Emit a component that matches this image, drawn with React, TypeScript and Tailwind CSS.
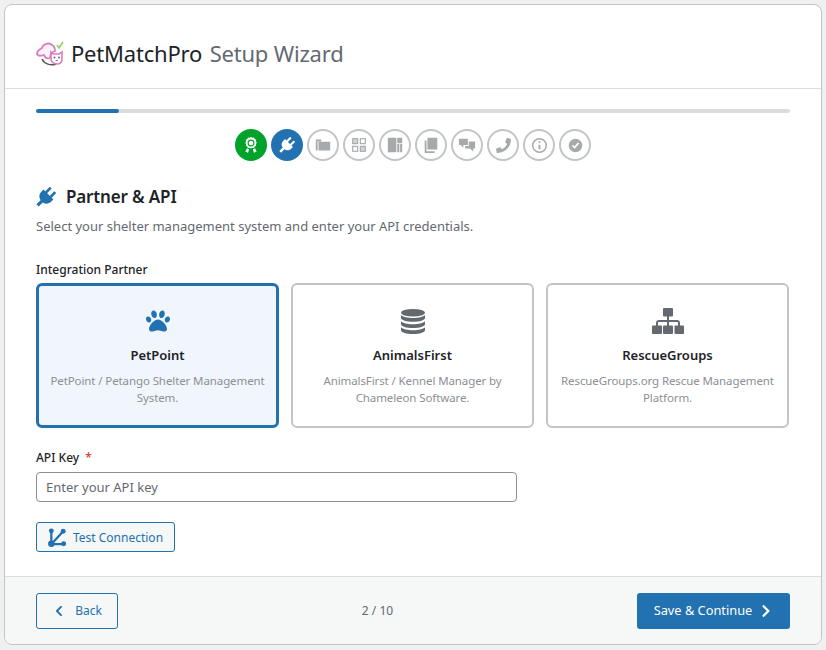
import React from 'react';
import { FaPaw, FaChevronLeft, FaChevronRight, FaPhone } from 'react-icons/fa';

const PlugIcon = ({ className = '' }: { className?: string }) => (
  <svg viewBox="0 0 20 20" className={className} fill="currentColor">
    <g transform="rotate(45 10 10)">
      <path d="M5.500 0h2.600v6.500H5.500zM11.900 0h2.600v6.500h-2.600zM3 6.500h14v3c0 3.800-2.500 6-5.400 6.600V22H8.400v-5.900C5.500 15.500 3 13.300 3 9.500z" />
    </g>
  </svg>
);

const AwardIcon = () => (
  <svg viewBox="0 0 20 20" className="w-[18px] h-[18px] text-white" fill="currentColor">
    <path fillRule="evenodd" d="M10 1l1.500 1 1.800-.2.800 1.600 1.600.8-.2 1.800 1 1.500-1 1.500.2 1.800-1.600.8-.8 1.600-1.800-.2-1.500 1-1.500-1-1.800.2-.8-1.600-1.600-.8.2-1.800-1-1.500 1-1.500-.2-1.800 1.600-.8.8-1.600 1.800.2zM10 4a3.800 3.800 0 100 7.600A3.800 3.800 0 0010 4z" />
    <circle cx="10" cy="7.800" r="2.600" />
    <path d="M5.500 13.500l2.500 1.300-1.500 4.500-1-1.800-1.800.2zM14.500 13.500l-2.500 1.300 1.500 4.500 1-1.800 1.800.2z" />
  </svg>
);

const FolderIcon = () => (
  <svg viewBox="0 0 20 20" className="w-[18px] h-[18px]" fill="currentColor">
    <path d="M2 4h6v2H2zM2 6.500h2V16H2zM5 6.500h13V16H5z" />
  </svg>
);

const GridIcon = () => (
  <svg viewBox="0 0 20 20" className="w-[18px] h-[18px]" fill="none" stroke="currentColor" strokeWidth="1.300">
    <rect x="3" y="3" width="5.500" height="5.500" fill="currentColor" fillOpacity="0.5" />
    <rect x="11.500" y="3" width="5.500" height="5.500" />
    <rect x="3" y="11.500" width="5.500" height="5.500" />
    <rect x="11.500" y="11.500" width="5.500" height="5.500" fill="currentColor" fillOpacity="0.5" />
  </svg>
);

const LayoutIcon = () => (
  <svg viewBox="0 0 20 20" className="w-[18px] h-[18px]" fill="currentColor">
    <path d="M2 2h9.500v16H2zM12.500 2H18v6h-5.500zM12.500 9h2.300v9h-2.300zM15.700 9H18v9h-2.300z" />
  </svg>
);

const PagesIcon = () => (
  <svg viewBox="0 0 20 20" className="w-[18px] h-[18px]" fill="currentColor">
    <path d="M6 2h11v13H6z" />
    <path d="M3 5h2v12h9v2H3z" />
  </svg>
);

const ChatIcon = () => (
  <svg viewBox="0 0 20 20" className="w-[18px] h-[18px]" fill="currentColor">
    <path d="M1 3h10v7H6v3l-3-3H1z" />
    <path d="M12 6h7v8h-2v3.500L13.500 14H8v-3h4z" />
  </svg>
);

const InfoIcon = () => (
  <svg viewBox="0 0 20 20" className="w-[17px] h-[17px]" fill="none" stroke="currentColor" strokeWidth="1.800">
    <circle cx="10" cy="10" r="8" />
    <path d="M10 9v5.500" strokeWidth="2.200" />
    <circle cx="10" cy="6" r="1.200" fill="currentColor" stroke="none" />
  </svg>
);

const CheckIcon = () => (
  <svg viewBox="0 0 20 20" className="w-[17px] h-[17px]" fill="currentColor">
    <path fillRule="evenodd" d="M10 2a8 8 0 100 16 8 8 0 000-16zm4.300 5.600l-5.200 6.100-3.400-3 1.300-1.400 1.900 1.700 3.900-4.600z" />
  </svg>
);

const NetworkIcon = () => (
  <svg viewBox="0 0 20 20" className="w-[19px] h-[19px]" fill="none" stroke="currentColor" strokeWidth="2.400">
    <path d="M3.500 3v14h13M3.500 17L16 3.500" />
    <circle cx="3.500" cy="3" r="2.600" fill="currentColor" stroke="none" />
    <circle cx="16" cy="3.500" r="2.600" fill="currentColor" stroke="none" />
    <circle cx="3.500" cy="16.500" r="3.400" fill="currentColor" stroke="none" />
    <circle cx="16.500" cy="16.500" r="2.600" fill="currentColor" stroke="none" />
  </svg>
);

const DatabaseIcon = () => (
  <svg viewBox="0 0 24 25" className="w-6 h-[25px] text-[#646970]" fill="currentColor">
    <ellipse cx="12" cy="3.800" rx="12" ry="3.800" />
    <path d="M0 6v3c0 2.100 5.400 3.800 12 3.800S24 11.100 24 9V6c-2 2-6.500 3-12 3S2 8 0 6z" />
    <path d="M0 12.200v3c0 2.100 5.400 3.800 12 3.800s12-1.700 12-3.800v-3c-2 2-6.500 3-12 3s-10-1-12-3z" />
    <path d="M0 18.200v3c0 2.100 5.400 3.800 12 3.800s12-1.700 12-3.800v-3c-2 2-6.500 3-12 3s-10-1-12-3z" />
  </svg>
);

const SitemapIcon = () => (
  <svg viewBox="0 0 32 26" className="w-8 h-[26px] text-[#646970]" fill="currentColor">
    <rect x="11" y="0" width="10" height="8.500" rx="1" />
    <rect x="0" y="17.500" width="10" height="8.500" rx="1" />
    <rect x="11" y="17.500" width="10" height="8.500" rx="1" />
    <rect x="22.500" y="17.500" width="9.500" height="8.500" rx="1" />
    <path d="M15 8h2v4h8c2 0 3 1 3 3v3h-2v-3c0-.7-.3-1-1-1h-8v4h-2v-4H7c-.7 0-1 .3-1 1v3H4v-3c0-2 1-3 3-3h8z" />
  </svg>
);

const PetLogo = () => (
  <svg viewBox="0 0 30 28" className="w-[30px] h-[28px]" fill="none">
    <path d="M22 6l2 3 4-6" stroke="#8fd46a" strokeWidth="1.600" />
    <path d="M2 15c0-3 3-5 5-6 1-4 7-6 10-3 2 1 3 4 3 6-3 1-5 3-5 7-3 1-5 0-6-3-3 1-6 1-7-1z" stroke="#d77fc0" strokeWidth="1.800" fill="#fdf2fa" />
    <path d="M7 20c2 5 9 7 14 5" stroke="#555" strokeWidth="1.500" />
    <path d="M16 13l2 2h6l3-2v7c0 3-2 5-5 5s-6-2-6-5z" stroke="#d77fc0" strokeWidth="1.600" fill="#fff" />
    <circle cx="19.500" cy="18.500" r="1" fill="#666" />
    <circle cx="24" cy="18.500" r="1" fill="#666" />
    <path d="M20.500 21.500h2.500" stroke="#888" strokeWidth="1" />
  </svg>
);

const steps = [
  { icon: <AwardIcon />, state: 'done' },
  { icon: <PlugIcon className="w-4 h-4" />, state: 'active' },
  { icon: <FolderIcon />, state: 'todo' },
  { icon: <GridIcon />, state: 'todo' },
  { icon: <LayoutIcon />, state: 'todo' },
  { icon: <PagesIcon />, state: 'todo' },
  { icon: <ChatIcon />, state: 'todo' },
  { icon: <FaPhone className="w-[15px] h-[15px]" />, state: 'todo' },
  { icon: <InfoIcon />, state: 'todo' },
  { icon: <CheckIcon />, state: 'todo' },
];

const partners = [
  {
    name: 'PetPoint',
    desc: 'PetPoint / Petango Shelter Management System.',
    icon: <FaPaw className="w-6 h-6 text-[#2271b1]" />,
    selected: true,
  },
  {
    name: 'AnimalsFirst',
    desc: 'AnimalsFirst / Kennel Manager by Chameleon Software.',
    icon: <DatabaseIcon />,
    selected: false,
  },
  {
    name: 'RescueGroups',
    desc: 'RescueGroups.org Rescue Management Platform.',
    icon: <SitemapIcon />,
    selected: false,
  },
];

export default function App() {
  return (
    <div className="w-[826px] h-[650px] bg-[#f0f0f1] pt-1 px-1 font-['Noto_Sans','Open_Sans',sans-serif] text-[#1d2327] overflow-hidden">
      <div className="w-[818px] h-[641px] bg-white border border-[#c3c4c7] rounded-lg overflow-hidden flex flex-col">
        <header className="h-[84px] shrink-0 border-b border-[#dcdcde] flex items-center pl-[30px] pt-[13px] gap-[6px]">
          <PetLogo />
          <h1 className="text-[22px] leading-none tracking-[-0.2px]">
            PetMatchPro <span className="text-[#646970] ml-[2px]">Setup Wizard</span>
          </h1>
        </header>

        <main className="flex-1 px-[31px] pt-5">
          <div className="h-1 bg-[#dcdcde] rounded-sm">
            <div className="h-1 w-[83px] bg-[#2271b1] rounded-sm" />
          </div>

          <div className="flex justify-center gap-1 mt-4">
            {steps.map((step, i) => (
              <div
                key={i}
                className={
                  step.state === 'done'
                    ? 'w-8 h-8 rounded-full flex items-center justify-center bg-[#00a32a] text-white'
                    : step.state === 'active'
                      ? 'w-8 h-8 rounded-full flex items-center justify-center bg-[#2271b1] text-white'
                      : 'w-8 h-8 rounded-full flex items-center justify-center border-2 border-[#c3c4c7] text-[#a7aaad] bg-white'
                }
              >
                {step.icon}
              </div>
            ))}
          </div>

          <div className="flex items-center gap-[10px] mt-6">
            <PlugIcon className="w-5 h-5 text-[#2271b1]" />
            <h2 className="text-[17px] leading-6 font-semibold tracking-[-0.15px]">Partner &amp; API</h2>
          </div>
          <p className="text-[13px] leading-5 text-[#646970] mt-[7px]">
            Select your shelter management system and enter your API credentials.
          </p>

          <div className="text-xs leading-4 font-medium mt-[26px]">Integration Partner</div>
          <div className="grid grid-cols-[243px_243px_243px] gap-3 mt-[5px]">
            {partners.map((p) => (
              <div
                key={p.name}
                className={
                  p.selected
                    ? 'h-[145px] rounded-md border-[3px] border-[#2271b1] bg-[#f0f6fc] flex flex-col items-center px-2 pt-[22px] text-center'
                    : 'h-[145px] rounded-md border-2 border-[#c3c4c7] bg-white flex flex-col items-center px-[9px] pt-[23px] text-center'
                }
              >
                <div className="h-[26px] flex items-center justify-center">{p.icon}</div>
                <div className="text-[13px] leading-5 font-semibold mt-[11px]">{p.name}</div>
                <div className="text-[11.5px] leading-[16.5px] tracking-[-0.1px] text-[#8c8f94] mt-[8px]">{p.desc}</div>
              </div>
            ))}
          </div>

          <label className="block text-xs leading-4 font-medium mt-[22px]">
            API Key <span className="text-[#d63638] ml-[3px]">*</span>
          </label>
          <input
            readOnly
            placeholder="Enter your API key"
            className="block w-[481px] h-[30px] mt-[6px] px-[9px] text-[13px] border border-[#8c8f94] rounded bg-white placeholder:text-[#646970] outline-none"
          />

          <button className="mt-5 h-[30px] w-[139px] border border-[#2271b1] rounded-[3px] bg-[#f6f7f7] text-[#2271b1] text-xs flex items-center justify-center gap-[6px] pt-[1px]">
            <NetworkIcon />
            Test Connection
          </button>
        </main>

        <footer className="h-[68px] shrink-0 bg-[#f6f7f7] border-t border-[#dcdcde] flex items-center justify-between px-[31px] pt-[1px]">
          <button className="w-[82px] h-9 border border-[#2271b1] rounded-[3px] text-[#2271b1] text-xs flex items-center justify-center gap-[10px] pl-[1px]">
            <FaChevronLeft className="w-[12px] h-[12px]" />
            Back
          </button>
          <span className="text-xs text-[#646970]">2 / 10</span>
          <button className="w-[153px] h-9 bg-[#2271b1] rounded-[3px] text-white text-[12.8px] flex items-center justify-center gap-[7px]">
            Save &amp; Continue
            <FaChevronRight className="w-[14px] h-[14px]" />
          </button>
        </footer>
      </div>
    </div>
  );
}
